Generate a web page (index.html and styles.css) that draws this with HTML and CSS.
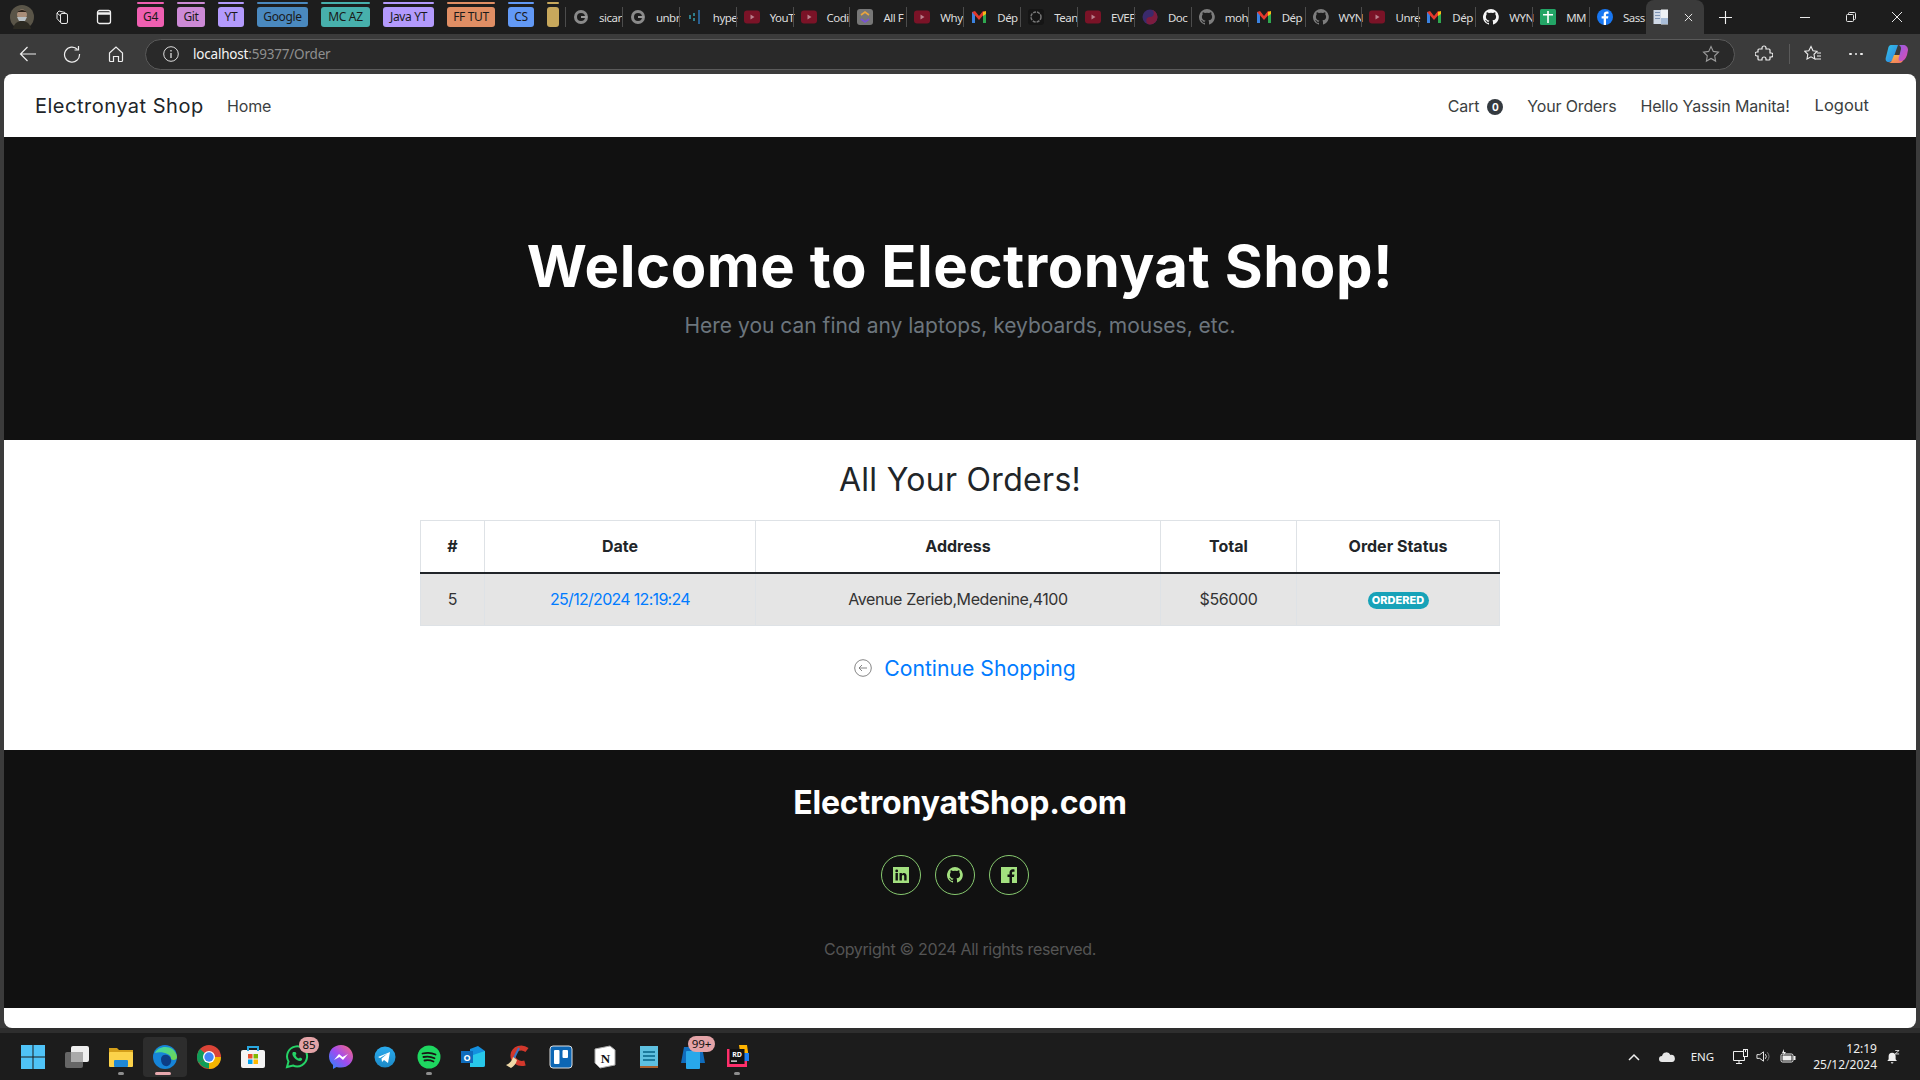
FILE: index.html
```html
<!DOCTYPE html>
<html lang="en">
<head>
<meta charset="utf-8">
<title>Electronyat Shop</title>
<link rel="stylesheet" href="styles.css">
</head>
<body>
<svg class="defs" width="0" height="0" aria-hidden="true">
  <symbol id="g" viewBox="0 0 16 16"><circle cx="8" cy="8" r="5.5" fill="none" stroke="#8a8a8a" stroke-width="3"/><path d="M8 7h6v2H8z" fill="#9a9a9a"/></symbol>
  <symbol id="yt" viewBox="0 0 16 16"><rect width="16" height="13" y="1.5" rx="3" fill="#7a1327"/><path d="M6.5 5.5l4 2.5-4 2.5z" fill="#b9808c"/></symbol>
  <symbol id="mail" viewBox="0 0 16 16"><path d="M1 14V3l3 0v11z" fill="#3b82e0"/><path d="M12 14V3h3v11z" fill="#2fa84f"/><path d="M1 3l3-1 4 5 4-5 3 1-7 8z" fill="#e5392c"/><path d="M12 3l3-1v3l-3 2z" fill="#f7bb16"/></symbol>
  <symbol id="gh" viewBox="0 0 16 16"><path fill="currentColor" d="M8 0a8 8 0 0 0-2.5 15.6c.4.1.5-.2.5-.4v-1.4c-2.2.5-2.7-1-2.7-1-.4-.9-.9-1.200-.9-1.200-.7-.5.1-.5.1-.5.8.1 1.200.8 1.200.8.700 1.200 1.900.9 2.300.7.100-.5.300-.9.500-1.100-1.800-.2-3.600-.9-3.600-4 0-.9.300-1.600.800-2.100-.100-.2-.400-1 .100-2.100 0 0 .700-.2 2.200.8a7.600 7.600 0 0 1 4 0c1.500-1 2.200-.8 2.200-.8.400 1.100.200 1.900.100 2.100.500.600.800 1.300.800 2.100 0 3.100-1.900 3.700-3.700 3.900.300.300.600.700.600 1.500v2.200c0 .2.100.500.600.400A8 8 0 0 0 8 0z"/></symbol>
</svg>
<div class="screen">
  <div class="browser">
    <div class="tabbar">
      <div class="profile"><svg class="avatar" viewBox="0 0 24 24"><circle cx="12" cy="12" r="12" fill="#5a5548"/><circle cx="12" cy="9.500" r="5" fill="#a88d78"/><path d="M7 12h10l-2 4H9z" fill="#b8c0c4"/><path d="M3 24c1-6 5-8 9-8s8 2 9 8z" fill="#2c2a22"/><path d="M7 8c1-4 9-4 10 0l-1-1H8z" fill="#2a2119"/></svg></div>
      <svg class="tb-ico ws" viewBox="0 0 16 16" fill="none" stroke="#e8e8e8" stroke-width="1"><rect x="6.500" y="4.500" width="7" height="10" rx="1.500"/><path d="M6.500 13.500L3 9.500V4l2-2 6 1.500v1M3 4l3.500 3"/></svg>
      <svg class="tb-ico vt" viewBox="0 0 16 16" fill="none" stroke="#f0f0f0" stroke-width="1.300"><rect x="1.500" y="1.500" width="13" height="13" rx="2"/><path d="M1.500 4.500h13" stroke-width="2.500"/></svg>
      <div class="groups">
        <div class="group g-pink"><span>G4</span></div>
        <div class="group g-orchid"><span>Git</span></div>
        <div class="group g-violet"><span>YT</span></div>
        <div class="group g-steel"><span>Google</span></div>
        <div class="group g-teal"><span>MC AZ</span></div>
        <div class="group g-violet wide"><span>Java YT</span></div>
        <div class="group g-orange"><span>FF TUT</span></div>
        <div class="group g-blue"><span>CS</span></div>
        <div class="group g-gold"><span></span></div>
      </div>
      <div class="tabs">
        <div class="tab"><svg class="fav"><use href="#g"/></svg><span>sicar</span></div>
        <div class="tab"><svg class="fav"><use href="#g"/></svg><span>unbr</span></div>
        <div class="tab"><svg class="fav" viewBox="0 0 16 16"><path d="M6 4h2v3H6zM6 9h2v3H6zM2 6h2v4H2z" fill="#2e7f8c"/><path d="M11 1h2v14h-2z" fill="#2a5f8f"/></svg><span>hype</span></div>
        <div class="tab"><svg class="fav"><use href="#yt"/></svg><span>YouT</span></div>
        <div class="tab"><svg class="fav"><use href="#yt"/></svg><span>Codi</span></div>
        <div class="tab"><svg class="fav" viewBox="0 0 16 16"><rect width="16" height="16" rx="3" fill="#777"/><path d="M4 6l4-3 4 3" fill="none" stroke="#e9a53d" stroke-width="1.600"/><path d="M4 10l4 3 4-3" fill="none" stroke="#7a52d6" stroke-width="1.600"/></svg><span>All F</span></div>
        <div class="tab"><svg class="fav"><use href="#yt"/></svg><span>Why</span></div>
        <div class="tab"><svg class="fav"><use href="#mail"/></svg><span>Dép</span></div>
        <div class="tab"><svg class="fav" viewBox="0 0 16 16"><rect width="16" height="16" rx="3" fill="#151515"/><circle cx="8" cy="8" r="5" fill="none" stroke="#777" stroke-width="1.500" stroke-dasharray="3 1"/></svg><span>Tean</span></div>
        <div class="tab"><svg class="fav"><use href="#yt"/></svg><span>EVEF</span></div>
        <div class="tab"><svg class="fav" viewBox="0 0 16 16"><circle cx="8" cy="8" r="7.500" fill="#3a2a6c"/><path d="M8 .5a3.750 3.750 0 0 1 0 7.500 3.750 3.750 0 0 0 0 7.500 7.500 7.500 0 0 0 0-15z" fill="#7c1c3f"/></svg><span>Doc</span></div>
        <div class="tab dim"><svg class="fav"><use href="#gh"/></svg><span>moh</span></div>
        <div class="tab"><svg class="fav"><use href="#mail"/></svg><span>Dép</span></div>
        <div class="tab dim"><svg class="fav"><use href="#gh"/></svg><span>WYN</span></div>
        <div class="tab"><svg class="fav"><use href="#yt"/></svg><span>Unre</span></div>
        <div class="tab"><svg class="fav"><use href="#mail"/></svg><span>Dép</span></div>
        <div class="tab bright"><svg class="fav"><use href="#gh"/></svg><span>WYN</span></div>
        <div class="tab"><svg class="fav" viewBox="0 0 16 16"><rect width="16" height="16" rx="1.500" fill="#23a566"/><path d="M7.200 2h1.600v3H13v1.500H8.800V14H7.200V6.500H3V5h4.200z" fill="#fff"/></svg><span>MM</span></div>
        <div class="tab"><svg class="fav" viewBox="0 0 16 16"><circle cx="8" cy="8" r="8" fill="#1877f2"/><path d="M9 16V9.500h2l.400-2.300H9V6c0-.700.300-1.200 1.200-1.200h1.300V2.700C11 2.600 10.400 2.500 9.800 2.500 7.900 2.500 6.700 3.700 6.700 5.700v1.500H4.600v2.300h2.100V16z" fill="#fff"/></svg><span>Sass</span></div>
      </div>
      <div class="active-tab">
        <svg class="fav" viewBox="0 0 16 16"><rect x="0.500" y="1" width="9" height="14" fill="#cfd8e6"/><rect x="8" y="0.500" width="7" height="15" fill="#eef1f5"/><path d="M2 3h5v1H2zM2 6h5v1H2zM2 9h5v1H2z" fill="#7d93b5"/><rect x="8" y="9" width="7" height="6" fill="#a9bdd8"/></svg>
        <svg class="x" viewBox="0 0 10 10" stroke="#e8e8e8" stroke-width="1.100"><path d="M1 1l8 8M9 1l-8 8"/></svg>
      </div>
      <svg class="plus" viewBox="0 0 14 14" stroke="#f2f2f2" stroke-width="1.200"><path d="M7 0v14M0 7h14"/></svg>
      <div class="winctl">
        <svg viewBox="0 0 10 10" stroke="#e8e8e8" fill="none"><path d="M0 5.500h10"/></svg>
        <svg viewBox="0 0 10 10" stroke="#e8e8e8" fill="none"><rect x="0.500" y="2.500" width="7" height="7" rx="1"/><path d="M2.500 2.500v-1a1 1 0 0 1 1-1h5a1 1 0 0 1 1 1v5a1 1 0 0 1-1 1h-1"/></svg>
        <svg viewBox="0 0 10 10" stroke="#e8e8e8" fill="none"><path d="M0 0l10 10M10 0L0 10"/></svg>
      </div>
    </div>
    <div class="toolbar">
      <svg class="tool first" viewBox="0 0 18 18" fill="none" stroke="#eee" stroke-width="1.200"><path d="M17 9H1.500M8.500 2L1.500 9l7 7"/></svg>
      <svg class="tool" viewBox="0 0 18 18" fill="none" stroke="#eee" stroke-width="1.200"><path d="M14.500 4.500A7.500 7.500 0 1 0 16.500 9"/><path d="M15.500 1v4h-4"/></svg>
      <svg class="tool" viewBox="0 0 18 18" fill="none" stroke="#eee" stroke-width="1.200"><path d="M2.500 8L9 2l6.500 6v7.500a1 1 0 0 1-1 1h-3v-5h-5v5h-3a1 1 0 0 1-1-1z"/></svg>
      <div class="address">
        <svg class="info" viewBox="0 0 16 16" fill="none" stroke="#ddd"><circle cx="8" cy="8" r="7.300"/><path d="M8 7v5" stroke-width="1.300"/><path d="M8 4v1.500" stroke-width="1.300"/></svg>
        <div class="url"><span class="host">localhost</span>:59377/Order</div>
        <svg class="star" viewBox="0 0 18 18" fill="none" stroke="#9a9a9a" stroke-width="1.100"><path d="M9 1.500l2.300 4.900 5.200.700-3.800 3.700.900 5.300L9 13.500l-4.600 2.600.900-5.300L1.500 7.100l5.200-.700z"/></svg>
      </div>
      <svg class="tool ext" viewBox="0 0 18 18" fill="none" stroke="#eee" stroke-width="1.200"><path d="M7 3a2 2 0 0 1 4 0v1h3a1 1 0 0 1 1 1v3h1a2 2 0 0 1 0 4h-1v2a1 1 0 0 1-1 1h-3v-1a2 2 0 0 0-4 0v1H4a1 1 0 0 1-1-1v-3H2a2 2 0 0 1 0-4h1V5a1 1 0 0 1 1-1h3z"/></svg>
      <div class="tsep"></div>
      <svg class="tool fav2" viewBox="0 0 18 18" fill="none" stroke="#eee" stroke-width="1.100"><path d="M7 1.500l2 4.300 4 .500-3 3 .800 4.600L7 11.800l-4 2.100.800-4.600-3-3 4-.500zM13 8h4M13 11h4M11 14h6"/></svg>
      <div class="dots"><i></i><i></i><i></i></div>
      <svg class="copilot" viewBox="0 0 24 24"><defs><linearGradient id="cp1" x1="0" y1="0" x2="1" y2="1"><stop offset="0" stop-color="#32c5e8"/><stop offset="1" stop-color="#2f7de1"/></linearGradient><linearGradient id="cp2" x1="0" y1="0" x2="1" y2="1"><stop offset="0" stop-color="#f8c23d"/><stop offset="1" stop-color="#f06a6a"/></linearGradient><linearGradient id="cp3" x1="0" y1="0" x2="1" y2="1"><stop offset="0" stop-color="#8f5fe8"/><stop offset="1" stop-color="#e04bb0"/></linearGradient></defs><path d="M6 3h7l-5 14c-.5 2-2 3-4 3-3 0-4-2-3-5l2-8c.5-3 1.500-4 3-4z" fill="url(#cp1)"/><path d="M3 21h11c3 0 4-2 5-5l1-3H9l-2 5c-.5 2-2 3-4 3z" fill="url(#cp2)"/><path d="M13 3h5c3 0 5 2 5 5l-1 5c-1 3-3 6-6 6-2 0-3-1-2-4l2-8c.3-2-1-4-3-4z" fill="url(#cp3)"/></svg>
    </div>
    <div class="viewport">
      <nav class="nav">
        <a class="brand">Electronyat Shop</a>
        <a class="nav-link home">Home</a>
        <div class="nav-right">
          <a class="nav-link cart">Cart <span class="count">0</span></a>
          <a class="nav-link">Your Orders</a>
          <a class="nav-link">Hello Yassin Manita!</a>
          <a class="logout">Logout</a>
        </div>
      </nav>
      <header class="hero">
        <h1>Welcome to Electronyat Shop!</h1>
        <p>Here you can find any laptops, keyboards, mouses, etc.</p>
      </header>
      <main class="orders">
        <h2>All Your Orders!</h2>
        <table class="order-table">
          <colgroup><col class="c1"><col class="c2"><col class="c3"><col class="c4"><col class="c5"></colgroup>
          <thead><tr><th>#</th><th>Date</th><th>Address</th><th>Total</th><th>Order Status</th></tr></thead>
          <tbody><tr><td>5</td><td><a class="date-link">25/12/2024 12:19:24</a></td><td class="addr">Avenue Zerieb,Medenine,4100</td><td class="addr">$56000</td><td><span class="status">ORDERED</span></td></tr></tbody>
        </table>
        <a class="continue">
          <svg class="back" viewBox="0 0 18 18" fill="none" stroke="#777" stroke-width="0.900"><circle cx="9" cy="9" r="8.300"/><path d="M13 9H5M8 6L5 9l3 3"/></svg>
          <span>Continue Shopping</span>
        </a>
      </main>
      <footer class="footer">
        <h3>ElectronyatShop.com</h3>
        <div class="socials">
          <a class="social"><svg viewBox="0 0 16 16"><path fill-rule="evenodd" d="M0 0h16v16H0zM2.500 6v7.500h2.400V6zM3.700 2.500a1.400 1.400 0 1 0 0 2.800 1.400 1.400 0 0 0 0-2.800zM6.500 6v7.500h2.400V9.600c0-2 2.300-2 2.300 0v3.900h2.400V9c0-3.700-3.700-3.700-4.700-1.900V6z"/></svg></a>
          <a class="social"><svg><use href="#gh"/></svg></a>
          <a class="social"><svg viewBox="0 0 16 16"><path fill-rule="evenodd" d="M0 0h16v16H0zM11 16V10h2l.400-2.500H11V6c0-.800.400-1.300 1.300-1.300h1.200V2.500C13 2.400 12.400 2.300 11.800 2.300 9.800 2.300 8.500 3.600 8.500 5.700v1.800H6.500V10h2v6z"/></svg></a>
        </div>
        <p>Copyright © 2024 All rights reserved.</p>
      </footer>
    </div>
  </div>
  <div class="taskbar">
    <div class="task-icons">
      <div class="ti"><svg viewBox="0 0 24 24"><path d="M0 0h11.500v11.500H0zM12.500 0H24v11.500H12.500zM0 12.500h11.500V24H0zM12.500 12.500H24V24H12.500z" fill="#4fc3f7"/></svg></div>
      <div class="ti"><svg viewBox="0 0 24 24"><rect y="7" width="18" height="16" rx="2" fill="#666"/><rect x="6" y="1" width="18" height="16" rx="2" fill="#eee"/><rect x="6" y="7" width="12" height="10" fill="#aaa"/></svg></div>
      <div class="ti run"><svg viewBox="0 0 24 24"><path d="M0 3h8l2 2h14v4H0z" fill="#d49f1a"/><rect y="7" width="24" height="15" rx="1" fill="#fbd24a"/><rect x="5" y="15" width="14" height="7" rx="1" fill="#1e88d6"/></svg></div>
      <div class="ti current"><svg viewBox="0 0 24 24"><defs><linearGradient id="ed" x1="0" y1="0" x2="1" y2="1"><stop offset="0" stop-color="#3bd6b0"/><stop offset="1" stop-color="#74d64a"/></linearGradient></defs><circle cx="12" cy="12" r="12" fill="#1684d8"/><path d="M2 8C5 0 22-1 24 12c0 3-4 4-6 2 1-5-9-8-16-6z" fill="url(#ed)"/><path d="M8 14c0-5 8-6 10 0 1 4-2 8-6 7-3-1-4-4-4-7z" fill="#0d3d86"/></svg></div>
      <div class="ti"><svg viewBox="0 0 24 24"><circle cx="12" cy="12" r="12" fill="#db4437"/><path d="M12 12L1.600 18A12 12 0 0 1 3 4z" fill="#0f9d58"/><path d="M12 12l-10 6A12 12 0 0 0 24 12z" fill="#0f9d58"/><path d="M12 12h12a12 12 0 0 1-12 12z" fill="#f4b400"/><circle cx="12" cy="12" r="6" fill="#fff"/><circle cx="12" cy="12" r="4.700" fill="#4285f4"/></svg></div>
      <div class="ti"><svg viewBox="0 0 24 24"><rect y="5" width="24" height="18" rx="2" fill="#f4f4f4"/><path d="M7 6V2h10v4" fill="none" stroke="#29a8e0" stroke-width="2"/><path d="M7 9h4.500v4.500H7z" fill="#e8502d"/><path d="M12.500 9H17v4.500h-4.500z" fill="#7fba00"/><path d="M7 14.500h4.500V19H7z" fill="#00a4ef"/><path d="M12.500 14.500H17V19h-4.500z" fill="#ffb900"/></svg></div>
      <div class="ti badge-wrap"><svg viewBox="0 0 24 24" fill="none"><path d="M2 22l1.500-5.500A10 10 0 1 1 8 20.500z" stroke="#25d366" stroke-width="2"/><path d="M8 7c-1 1-1 3 1 5.500s5 4 6.500 3.500 2-2 1.500-2.500l-2-1-1 1c-2-.5-3-2-3.500-3.500l1-1-1-2z" fill="#25d366"/></svg><span class="notif">85</span></div>
      <div class="ti"><svg viewBox="0 0 24 24"><defs><linearGradient id="ms" x1="0" y1="1" x2="1" y2="0"><stop offset="0" stop-color="#1e8bff"/><stop offset="0.500" stop-color="#a04bf0"/><stop offset="1" stop-color="#ff6a7a"/></linearGradient></defs><path d="M12 0C5 0 0 5 0 11.500c0 3.500 1.500 6.500 4 8.500v4l3.500-2c1.500.4 3 .5 4.500.5 7 0 12-5 12-11S19 0 12 0z" fill="url(#ms)"/><path d="M5 15l5-6 3.500 3L19 9l-5 6-3.500-3z" fill="#fff"/></svg></div>
      <div class="ti"><svg viewBox="0 0 24 24"><defs><linearGradient id="tg" x1="0" y1="0" x2="0" y2="1"><stop offset="0" stop-color="#2aabee"/><stop offset="1" stop-color="#1c8ac7"/></linearGradient></defs><circle cx="12" cy="12" r="10.500" fill="url(#tg)"/><path d="M5 12l12-5-2 11-4-3-2 2-.5-3.500 6-5-7.500 4.500z" fill="#fff"/></svg></div>
      <div class="ti run"><svg viewBox="0 0 24 24" fill="none"><circle cx="12" cy="12" r="11.500" fill="#1ed760"/><path d="M5.500 8.500c4-1 9-1 13 1M6.500 12c3.500-.8 7.500-.5 11 1.200M7.500 15.500c3-.6 6-.3 9 1" stroke="#191414" stroke-width="1.800" stroke-linecap="round"/></svg></div>
      <div class="ti"><svg viewBox="0 0 24 24"><path d="M9 4l8-3 7 5v14a2 2 0 0 1-2 2H9z" fill="#1490df"/><path d="M9 11l15-5v14a2 2 0 0 1-2 2H9z" fill="#28c8ea"/><rect y="6" width="12" height="12" fill="#0f6cbd"/><text class="olk" x="6" y="15.500">O</text></svg></div>
      <div class="ti"><svg viewBox="0 0 24 24" fill="none"><path d="M22 5c-5-4-13-2-14 5-.5 5 5 10 12 8" stroke="#d2382c" stroke-width="5"/><path d="M14 3L9 13" stroke="#3576c4" stroke-width="2"/><path d="M1 20c3-1 6-4 7-8l4 3c-1 4-3 6-6 8z" fill="#efd9a8"/></svg></div>
      <div class="ti"><svg viewBox="0 0 24 24"><rect x="1" y="1" width="22" height="22" rx="3" fill="#0c66b4" stroke="#ddd"/><rect x="5" y="5" width="5.500" height="14" rx="1" fill="#fff"/><rect x="13.500" y="5" width="5.500" height="8" rx="1" fill="#fff"/></svg></div>
      <div class="ti"><svg viewBox="0 0 24 24"><path d="M2 4l15-3 5 4v15l-15 3-5-5z" fill="#fff" stroke="#aaa"/><text class="ntn" x="12.500" y="18">N</text></svg></div>
      <div class="ti"><svg viewBox="0 0 24 24"><rect x="3" y="1" width="18" height="22" fill="#5ec0e0"/><path d="M6 6h12v2H6zM6 10h12v2H6zM6 14h12v2H6z" fill="#1b7a9d"/><rect x="3" y="21" width="18" height="2" fill="#a8602e"/></svg></div>
      <div class="ti badge-wrap"><svg viewBox="0 0 24 24"><path d="M3 2h18l3 16H0z" fill="#0f6cbd"/><rect x="5" y="6" width="14" height="18" rx="1" fill="#28a8ea"/></svg><span class="notif wide">99+</span></div>
      <div class="ti run"><svg viewBox="0 0 24 24"><path d="M2 4h20v18H2z" fill="#ff2f6b"/><path d="M14 0h8l2 14h-8z" fill="#ffb400"/><path d="M18 8h6v8h-6z" fill="#1d7ff0"/><rect x="4.500" y="4" width="15" height="15" fill="#111"/><text class="rd" x="12" y="12">RD</text><rect x="6" y="15.500" width="6" height="1.200" fill="#fff"/></svg></div>
    </div>
    <div class="tray">
      <svg class="chev" viewBox="0 0 12 8" fill="none" stroke="#eee" stroke-width="1.500"><path d="M1 7l5-5 5 5"/></svg>
      <svg class="cloud" viewBox="0 0 16 10" fill="#e6e6e6"><path d="M3 10a3 3 0 0 1 0-6 4.500 4.500 0 0 1 8.500-1 3.500 3.500 0 0 1 1.500 7z"/></svg>
      <span class="lang">ENG</span>
      <svg class="net" viewBox="0 0 16 16" fill="none" stroke="#eee"><path d="M11 2.500H1.500v9h11V8M7 11.500v3M4 14.500h6"/><rect x="11.500" y="0.500" width="4" height="7"/><path d="M13.500 0v3"/></svg>
      <svg class="vol" viewBox="0 0 16 16" fill="none" stroke="#eee"><path d="M1 6v4h3l4 3V3L4 6z"/><path d="M10 5.500a4 4 0 0 1 0 5"/><path d="M12 3.500a7 7 0 0 1 0 9" stroke="#888"/></svg>
      <svg class="bat" viewBox="0 0 16 16"><rect x="1" y="5" width="12" height="8" rx="1.500" fill="none" stroke="#eee"/><rect x="2.500" y="6.500" width="9" height="5" fill="#eee"/><rect x="13.500" y="7" width="2" height="4" fill="#eee"/><path d="M4 0L2 4h2l-1 3 3-4H4z" fill="#eee"/></svg>
      <div class="clock"><span>12:19</span><span>25/12/2024</span></div>
      <svg class="bell" viewBox="0 0 16 16" fill="#eee"><path d="M7 3a4 4 0 0 0-4 4v3.500L1.500 12.500h11L11 10.500V7a4 4 0 0 0-4-4zM5.500 14h3a1.500 1.500 0 0 1-3 0z"/><path d="M10.500 .5h4.500l-4.500 4h4.500" fill="none" stroke="#eee"/></svg>
    </div>
  </div>
</div>
</body>
</html>
```
FILE: styles.css
```css
* { box-sizing: border-box; }
html, body { margin: 0; padding: 0; height: 100%; overflow: hidden; background: #1c1c1c; }
body { font-family: "Inter", "Liberation Sans", sans-serif; color: #212529; }
.defs { position: absolute; }
.screen { width: 1920px; height: 1080px; display: flex; flex-direction: column; }
.browser { flex: none; height: 1028px; background: #3b3b3b; display: flex; flex-direction: column; }

/* tab strip */
.tabbar { height: 34px; background: #1d1d1d; display: flex; align-items: center; font-family: "Noto Sans", sans-serif; color: #e6e6e6; flex: none; }
.profile { width: 46px; flex: none; padding-left: 10px; display: flex; }
.avatar { width: 24px; height: 24px; }
.tb-ico { width: 16px; height: 16px; flex: none; }
.ws { margin-left: 8px; margin-right: 26px; }
.vt { margin-right: 20px; }
.groups { display: flex; height: 100%; padding-left: 5px; flex: none; }
.group { height: 34px; margin-right: 13px; padding-top: 2px; flex: none; display: flex; flex-direction: column; }
.group::before { content: ""; height: 2px; margin-bottom: 3px; background: var(--c); border-radius: 1px; }
.group span { height: 20px; background: var(--c); border-radius: 3px; color: #1a1a1a; font-size: 12px; line-height: 20px; letter-spacing: -0.35px; white-space: nowrap; text-align: center; display: block; }
.g-pink { --c: #ef5fb1; width: 27px; }
.g-orchid { --c: #cd8ad6; width: 28px; }
.g-violet { --c: #b39afc; width: 26px; }
.g-violet.wide { width: 51px; }
.g-steel { --c: #4a89bf; width: 51px; }
.g-teal { --c: #47b0ac; width: 49px; }
.g-orange { --c: #e08e64; width: 48px; }
.g-blue { --c: #6299f5; width: 26px; }
.g-gold { --c: #c8a85c; width: 12px; margin-right: 6px; }
.tabs { display: flex; flex: none; }
.tab { width: 56.900px; height: 20px; padding-left: 7px; border-left: 1px solid #4c4c4c; display: flex; align-items: center; gap: 10px; font-size: 11.500px; letter-spacing: -0.5px; color: #dcdcdc; white-space: nowrap; flex: none; }
.tab span { flex: none; }
.fav { width: 16px; height: 16px; flex: none; }
.dim .fav { color: #7d7d7d; }
.bright .fav { color: #f4f4f4; }
.active-tab { width: 58px; height: 34px; background: #3b3b3b; border-radius: 8px 8px 0 0; display: flex; align-items: center; padding-left: 7px; gap: 15px; flex: none; }
.x { width: 9px; height: 9px; }
.plus { width: 13px; height: 13px; margin-left: 15px; flex: none; }
.winctl { margin-left: auto; display: flex; gap: 36px; padding-right: 18px; flex: none; }
.winctl svg { width: 10px; height: 10px; }

/* toolbar */
.toolbar { height: 40px; display: flex; align-items: center; flex: none; }
.tool { width: 18px; height: 18px; flex: none; }
.first { margin-left: 19px; }
.toolbar .tool + .tool { margin-left: 26px; }
.address { width: 1590px; height: 31px; margin-left: 20px; border: 1px solid #5a5a5a; border-radius: 16px; background: #292929; display: flex; align-items: center; padding: 0 14px 0 17px; flex: none; font-family: "Noto Sans", sans-serif; }
.info { width: 16px; height: 16px; flex: none; }
.url { margin-left: 14px; color: #8f8f8f; font-size: 13.500px; letter-spacing: -0.2px; }
.host { color: #f4f4f4; }
.star { width: 18px; height: 18px; margin-left: auto; }
.toolbar .ext { margin-left: 20px; }
.tsep { width: 1px; height: 20px; background: #5a5a5a; margin-left: 16px; }
.fav2.tool { margin-left: 14px; }
.dots { display: flex; gap: 3px; margin-left: 27px; flex: none; }
.dots i { width: 2.500px; height: 2.500px; border-radius: 50%; background: #eee; display: block; }
.copilot { width: 24px; height: 24px; margin-left: 22px; flex: none; }

/* page */
.viewport { height: 954px; margin: 0 4px; background: #fff; border-radius: 8px; overflow: hidden; display: flex; flex-direction: column; flex: none; }
.nav { height: 63px; padding: 0 47px 0 31px; display: flex; align-items: center; flex: none; }
.brand { font-size: 20px; color: #212529; letter-spacing: 0.5px; width: 192px; }
.nav-link { font-size: 16px; color: #3c3f42; letter-spacing: -0.15px; }
.nav-right { margin-left: auto; display: flex; align-items: center; gap: 24px; }
.cart { display: flex; align-items: center; gap: 8px; }
.count { width: 16px; height: 16px; border-radius: 50%; background: #343a40; color: #fff; font-size: 10px; font-weight: 700; text-align: center; line-height: 16px; display: block; margin-top: 2px; }
.logout { font-size: 16.500px; color: #3c3f42; margin-top: -2px; margin-left: 1px; }

.hero { height: 303px; background: #111; padding-top: 92px; text-align: center; flex: none; }
.hero h1 { margin: 0; font-size: 58px; line-height: 74px; font-weight: 700; color: #fff; letter-spacing: 0.55px; }
.hero p { margin: 8px 0 0; font-size: 21px; line-height: 30px; color: #6c757d; }

.orders { height: 310px; padding-top: 16px; display: flex; flex-direction: column; align-items: center; flex: none; }
.orders h2 { margin: 0 0 16px; font-size: 32px; line-height: 48px; font-weight: 400; color: #212529; letter-spacing: 0.3px; }
.order-table { width: 1079px; table-layout: fixed; border-collapse: collapse; font-size: 16px; }
.c1 { width: 64px; } .c2 { width: 271px; } .c3 { width: 405px; } .c4 { width: 136px; } .c5 { width: 203px; }
.order-table th, .order-table td { border: 1px solid #dee2e6; text-align: center; vertical-align: middle; }
.order-table th { height: 52px; font-weight: 700; color: #212529; border-bottom: 2px solid #212529; }
.order-table td { height: 53px; background: #e5e5e5; color: #333; }
.date-link { color: #007bff; letter-spacing: -0.7px; }
.order-table .addr { letter-spacing: -0.4px; }
.status { display: inline-block; width: 61px; height: 17px; border-radius: 9px; background: #17a2b8; color: #fff; font-size: 11px; font-weight: 800; line-height: 17px; vertical-align: middle; }
.continue { margin: 26px 0 0 10px; display: flex; align-items: center; gap: 12px; color: #007bff; font-size: 21.200px; line-height: 32px; }
.back { width: 18px; height: 18px; }

.footer { height: 258px; background: #111; padding-top: 31px; text-align: center; flex: none; }
.footer h3 { margin: 0; font-size: 32px; line-height: 44px; font-weight: 700; color: #fff; letter-spacing: -0.2px; }
.socials { display: flex; justify-content: center; gap: 14px; margin-top: 30px; padding-right: 10px; }
.social { width: 40px; height: 40px; border: 1px solid #87c96f; border-radius: 50%; display: flex; align-items: center; justify-content: center; color: #a3e07f; fill: #a3e07f; }
.social svg { width: 16px; height: 16px; }
.footer p { margin: 42px 0 0; font-size: 16px; line-height: 24px; color: #555; letter-spacing: -0.34px; }

/* taskbar */
.taskbar { flex: none; height: 52px; background: #1c1c1c; border-top: 5px solid #2e2e2e; display: flex; align-items: center; justify-content: space-between; font-family: "Noto Sans", sans-serif; }
.task-icons { display: flex; padding-left: 11px; height: 100%; align-items: center; }
.ti { width: 44px; height: 40px; display: flex; align-items: center; justify-content: center; position: relative; flex: none; border-radius: 4px; }
.ti svg { width: 24px; height: 24px; }
.ti.current { background: #2d2d2d; }
.ti.current::after { content: ""; position: absolute; bottom: 2px; left: 12px; width: 16px; height: 3px; border-radius: 2px; background: #e8a9ae; }
.ti.run::after { content: ""; position: absolute; bottom: 2px; left: 19px; width: 6px; height: 3px; border-radius: 2px; background: #8d8d8d; }
.notif { position: absolute; top: 0; right: 0; min-width: 20px; height: 16px; padding: 0 3px; border-radius: 8px; background: #e3a3a7; color: #111; font-size: 11.500px; line-height: 16px; text-align: center; }
.notif.wide { right: 0; top: -1px; min-width: 27px; }
.olk { font: 700 9px "Noto Sans", sans-serif; fill: #fff; text-anchor: middle; }
.ntn { font: 700 13px "Liberation Serif", serif; fill: #111; text-anchor: middle; }
.rd { font: 700 7px "Noto Sans", sans-serif; fill: #fff; text-anchor: middle; }
.tray { display: flex; align-items: center; padding-right: 20px; color: #eee; }
.chev { width: 12px; height: 8px; }
.cloud { width: 16px; height: 10px; margin-left: 19px; }
.lang { margin-left: 16px; font-size: 11.500px; }
.net { width: 16px; height: 16px; margin-left: 18px; }
.vol { width: 15px; height: 15px; margin-left: 8px; }
.bat { width: 16px; height: 16px; margin-left: 9px; }
.clock { display: flex; flex-direction: column; align-items: flex-end; margin-left: 17px; font-size: 12px; line-height: 16px; }
.bell { width: 14px; height: 14px; margin-left: 9px; }
```
